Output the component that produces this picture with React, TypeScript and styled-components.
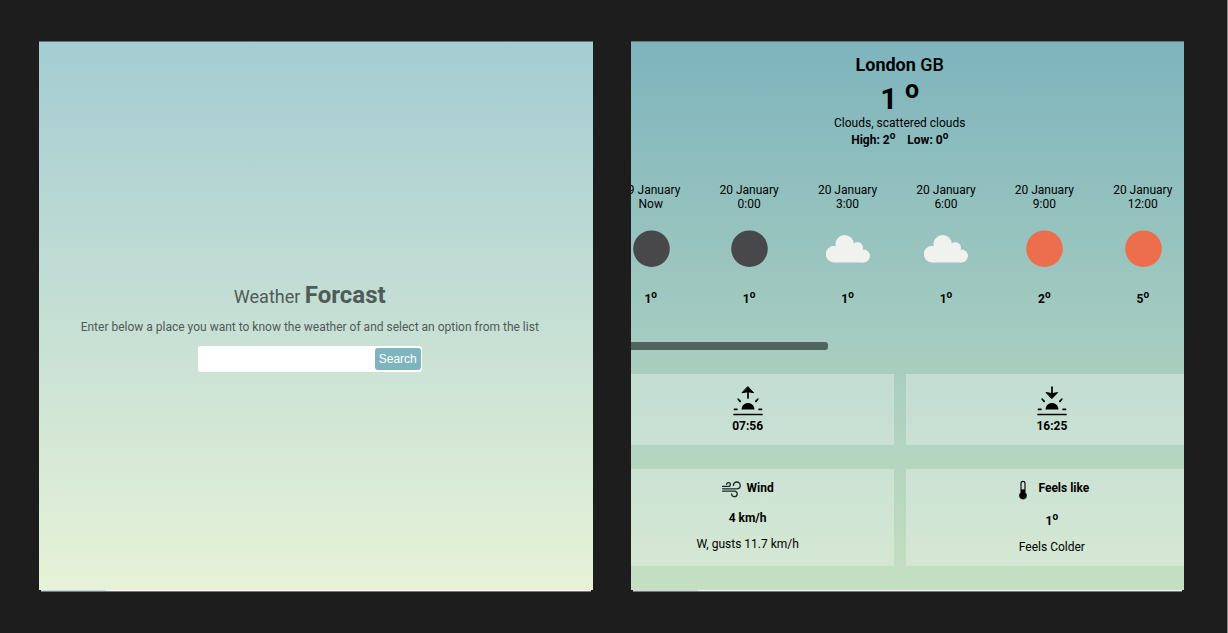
import React from "react";
import styled, { createGlobalStyle } from "styled-components";

const GlobalStyle = createGlobalStyle`
  *, *::before, *::after { box-sizing: border-box; }
  body {
    margin: 0;
    background: #1d1d1d;
    color: #000;
    font-family: Roboto, "Liberation Sans", sans-serif;
    font-size: 12px;
    line-height: 16px;
  }
  h1, h2, h3, p, ul { margin: 0; padding: 0; font-weight: 400; }
  sup { font-size: smaller; line-height: 0; }
`;

const Page = styled.main`
  display: grid;
  grid-template-columns: 1fr 1fr;
  gap: 38px;
  min-height: 100vh;
  padding: 41px 43px 41px 39px;
  border-right: 1px solid #858585;
`;

const Screen = styled.section`
  display: flex;
  flex-direction: column;
  min-width: 0;
`;

const Panel = styled.div<{ $from: string; $to: string }>`
  flex: 1;
  display: flex;
  flex-direction: column;
  overflow: hidden;
  border-top: 1px solid #6b7274;
  background: linear-gradient(${(p) => p.$from}, ${(p) => p.$to});
`;

const BottomEdge = styled.div<{ $accent: string }>`
  height: 2px;
  margin: 0 2px;
  border-bottom: 1px solid #77777b;
  background: linear-gradient(to right, ${(p) => p.$accent} 65px, #f4f4f4 65px);
`;

const SearchView = styled.div`
  flex: 1;
  display: flex;
  flex-direction: column;
  align-items: center;
  justify-content: center;
  padding: 20px 12px 0 0;
  color: #4e5b56;
`;

const Title = styled.h1`
  font-size: 18px;
  line-height: 28px;
  strong { font-size: 24px; }
`;

const Hint = styled.label`
  margin-top: 8px;
`;

const SearchForm = styled.form`
  display: flex;
  width: 224px;
  margin-top: 11px;
  padding: 2px 1px 2px 2px;
  border-radius: 3px;
  background: #fff;
`;

const SearchInput = styled.input`
  flex: 1;
  min-width: 0;
  border: 0;
  padding: 0 8px;
  background: transparent;
  outline: none;
`;

const SearchButton = styled.button`
  height: 22px;
  padding: 0 4px;
  border: 0;
  border-radius: 3px;
  background: #7eb4bd;
  color: #fff;
  font: 12px "Liberation Sans", sans-serif;
`;

const Forecast = styled.div`
  display: flex;
  flex-direction: column;
  margin: 0 -14px 0 -29px;
  padding-top: 12px;
`;

const Summary = styled.header`
  display: flex;
  flex-direction: column;
  align-items: center;
`;

const City = styled.h2`
  font-size: 18px;
  line-height: 22px;
  font-weight: 700;
  span { font-weight: 500; }
`;

const Current = styled.p`
  margin: 5px 0 -2px;
  font-size: 30px;
  line-height: 36px;
  font-weight: 700;
`;

const Range = styled.p`
  display: flex;
  gap: 12px;
  margin-top: 1px;
  font-weight: 700;
`;

const Hours = styled.ul`
  display: grid;
  grid-template-columns: repeat(6, 1fr);
  padding-right: 6px;
  margin-top: 35px;
  list-style: none;
`;

const Hour = styled.li`
  display: flex;
  flex-direction: column;
  align-items: center;
  line-height: 14px;
  svg { margin: 16px 0 20px; }
  strong { line-height: 16px; }
`;

const ScrollTrack = styled.div`
  height: 8px;
  margin-top: 35px;
`;

const ScrollThumb = styled.div`
  width: 38%;
  height: 8px;
  border-radius: 3px;
  background: #50655d;
`;

const Cards = styled.div`
  display: grid;
  grid-template-columns: 1fr 1fr;
  gap: 24px 12px;
  margin-top: 24px;
`;

const Card = styled.article`
  display: flex;
  flex-direction: column;
  align-items: center;
  padding: 11px 0;
  background: rgba(255, 255, 255, 0.31);
`;

const SunTime = styled.strong`
  margin-top: 2px;
`;

const CardTitle = styled.h3`
  display: flex;
  gap: 6px;
  height: 16px;
  font-size: 12px;
  font-weight: 700;
`;

const CardValue = styled.p<{ $raised?: boolean }>`
  margin: 14px 0 10px;
  padding-top: ${(p) => (p.$raised ? 3 : 0)}px;
  font-weight: 700;
`;

type Sky = "night" | "cloud" | "sun";

function SkyIcon({ sky }: { sky: Sky }) {
  return (
    <svg width="44" height="44" viewBox="0 0 44 44" aria-hidden="true">
      {sky === "cloud" ? (
        <g fill="#f1f1ef">
          <circle cx="8.4" cy="27" r="8" />
          <circle cx="18.7" cy="17.2" r="9.2" />
          <circle cx="31.4" cy="20.6" r="5.6" />
          <circle cx="37.6" cy="29" r="6.4" />
          <path d="M8 35.4V20L18 16L33 20L37.6 24V35.4Z" />
          <path d="M8 19A8.2 8.2 0 0 0 8 35.4Z" />
        </g>
      ) : (
        <circle cx="22.5" cy="21.7" r="18.3" fill={sky === "sun" ? "#ec6e4c" : "#48484a"} />
      )}
    </svg>
  );
}

function SunIcon({ rising }: { rising: boolean }) {
  return (
    <svg width="30" height="31" viewBox="0 -1 30 31" fill="none" stroke="#000" strokeWidth="1.7" strokeLinecap="round" aria-hidden="true">
      {rising ? (
        <>
          <path d="M15 12V4" />
          <path d="M15 .8L20.6 6.6L15 5.8L9.4 6.6Z" fill="#000" strokeWidth="1" strokeLinejoin="round" />
        </>
      ) : (
        <>
          <path d="M15 1V8" />
          <path d="M15 12.4L20.6 6.6L15 7.6L9.4 6.6Z" fill="#000" strokeWidth="1" strokeLinejoin="round" />
        </>
      )}
      <path d="M8.6 23.6C8.6 14.8 21.4 14.8 21.4 23.6Z" fill="#000" stroke="none" />
      <path d="M1.5 23.3H4M26 23.3H28.5M5.2 13.2L7.2 15.4M24.8 13.2L22.8 15.4M1 28.5H29" />
    </svg>
  );
}

function WindIcon() {
  return (
    <svg width="19" height="18" viewBox="0 -1 19 18" fill="none" stroke="#1b2a28" strokeWidth="1.3" strokeLinecap="round" aria-hidden="true">
      <path d="M.6 5.4H6.2A1.9 1.9 0 1 0 4.6 3.2" />
      <path d="M.6 7.8H14.8A3.4 3.4 0 1 0 11.4 4.4" />
      <path d="M.6 10.2H13.2A2.8 2.8 0 1 1 9.6 13" />
    </svg>
  );
}

function ThermometerIcon() {
  return (
    <svg width="18" height="20" viewBox="0 0 18 20" aria-hidden="true">
      <path d="M7 12V3.4A2 2 0 0 1 11 3.4V12" fill="none" stroke="#000" strokeWidth="1.1" />
      <circle cx="9" cy="15.6" r="3.8" fill="#000" />
      <path d="M7 9.4H11V14H7Z" fill="#000" />
    </svg>
  );
}

const hours: { day: string; time: string; sky: Sky; temp: number }[] = [
  { day: "19 January", time: "Now", sky: "night", temp: 1 },
  { day: "20 January", time: "0:00", sky: "night", temp: 1 },
  { day: "20 January", time: "3:00", sky: "cloud", temp: 1 },
  { day: "20 January", time: "6:00", sky: "cloud", temp: 1 },
  { day: "20 January", time: "9:00", sky: "sun", temp: 2 },
  { day: "20 January", time: "12:00", sky: "sun", temp: 5 },
];

export default function App() {
  return (
    <>
      <GlobalStyle />
      <Page>
        <Screen>
          <Panel $from="#a4ccd2" $to="#e7f2d7">
            <SearchView>
              <Title>Weather <strong>Forcast</strong></Title>
              <Hint htmlFor="place">
                Enter below a place you want to know the weather of and select an option from the list
              </Hint>
              <SearchForm onSubmit={(e) => e.preventDefault()}>
                <SearchInput id="place" type="text" />
                <SearchButton type="submit">Search</SearchButton>
              </SearchForm>
            </SearchView>
          </Panel>
          <BottomEdge $accent="#c5d9e6" />
        </Screen>
        <Screen>
          <Panel $from="#7eb4bd" $to="#c5dfc1">
            <Forecast>
              <Summary>
                <City>London <span>GB</span></City>
                <Current>1 <sup>o</sup></Current>
                <p>Clouds, scattered clouds</p>
                <Range>
                  <span>High: 2<sup>o</sup></span>
                  <span>Low: 0<sup>o</sup></span>
                </Range>
              </Summary>
              <Hours>
                {hours.map((h) => (
                  <Hour key={h.day + h.time}>
                    <span>{h.day}</span>
                    <span>{h.time}</span>
                    <SkyIcon sky={h.sky} />
                    <strong>{h.temp}<sup>o</sup></strong>
                  </Hour>
                ))}
              </Hours>
              <ScrollTrack><ScrollThumb /></ScrollTrack>
              <Cards>
                <Card><SunIcon rising /><SunTime>07:56</SunTime></Card>
                <Card><SunIcon rising={false} /><SunTime>16:25</SunTime></Card>
                <Card>
                  <CardTitle><WindIcon />Wind</CardTitle>
                  <CardValue>4 km/h</CardValue>
                  <p>W, gusts 11.7 km/h</p>
                </Card>
                <Card>
                  <CardTitle><ThermometerIcon />Feels like</CardTitle>
                  <CardValue $raised>1<sup>o</sup></CardValue>
                  <p>Feels Colder</p>
                </Card>
              </Cards>
            </Forecast>
          </Panel>
          <BottomEdge $accent="#c5d9e6" />
        </Screen>
      </Page>
    </>
  );
}
